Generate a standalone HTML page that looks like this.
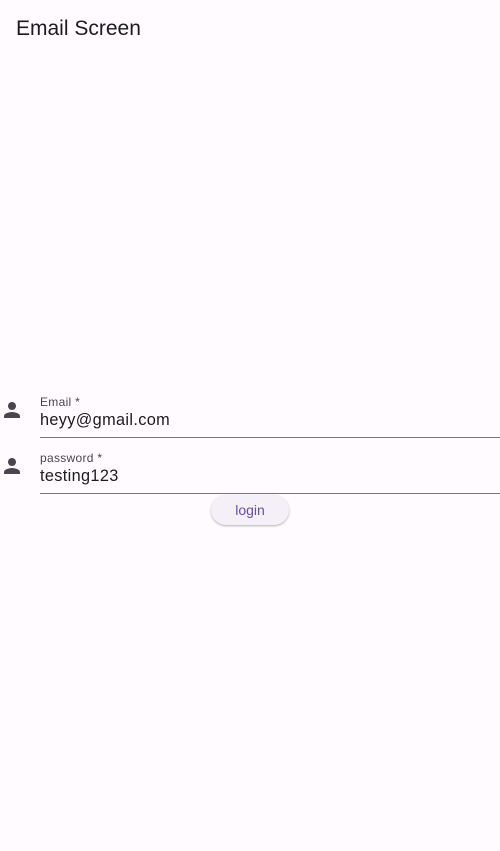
<!DOCTYPE html>
<html><head><style>
body{margin:0;width:500px;height:851px;background:#fffbfe;font-family:"Liberation Sans",sans-serif;position:relative;overflow:hidden;color:#1c1b1f}
.t{position:absolute;left:16px;top:17px;font-size:21px;color:#1c1b1f}
.ic{position:absolute;left:0;width:24px;height:24px}
.lb{position:absolute;left:40px;font-size:12px;color:#49454f;letter-spacing:0.3px}
.v{position:absolute;left:40px;font-size:16.3px;letter-spacing:0.35px}
.ln{position:absolute;left:40px;right:0;height:1px;background:#79747e}
.btn{position:absolute;left:211px;top:495px;width:78px;height:30px;border-radius:15px;background:#f5eff7;box-shadow:0 1px 2px rgba(0,0,0,.3);color:#6750a4;font-size:14px;text-align:center;line-height:30px}
</style></head><body>
<div class="t">Email Screen</div>
<svg class="ic" style="top:398px" viewBox="0 0 24 24"><path fill="#49454f" d="M12 12c2.21 0 4-1.79 4-4s-1.79-4-4-4-4 1.790-4 4 1.79 4 4 4zm0 2c-2.67 0-8 1.34-8 4v2h16v-2c0-2.66-5.33-4-8-4z"/></svg>
<div class="lb" style="top:395px">Email *</div>
<div class="v" style="top:411px">heyy@gmail.com</div>
<div class="ln" style="top:437px"></div>
<svg class="ic" style="top:454px" viewBox="0 0 24 24"><path fill="#49454f" d="M12 12c2.21 0 4-1.79 4-4s-1.79-4-4-4-4 1.79-4 4 1.79 4 4 4zm0 2c-2.67 0-8 1.34-8 4v2h16v-2c0-2.66-5.33-4-8-4z"/></svg>
<div class="lb" style="top:451px">password *</div>
<div class="v" style="top:467px">testing123</div>
<div class="ln" style="top:493px"></div>
<div class="btn">login</div>
</body></html>
